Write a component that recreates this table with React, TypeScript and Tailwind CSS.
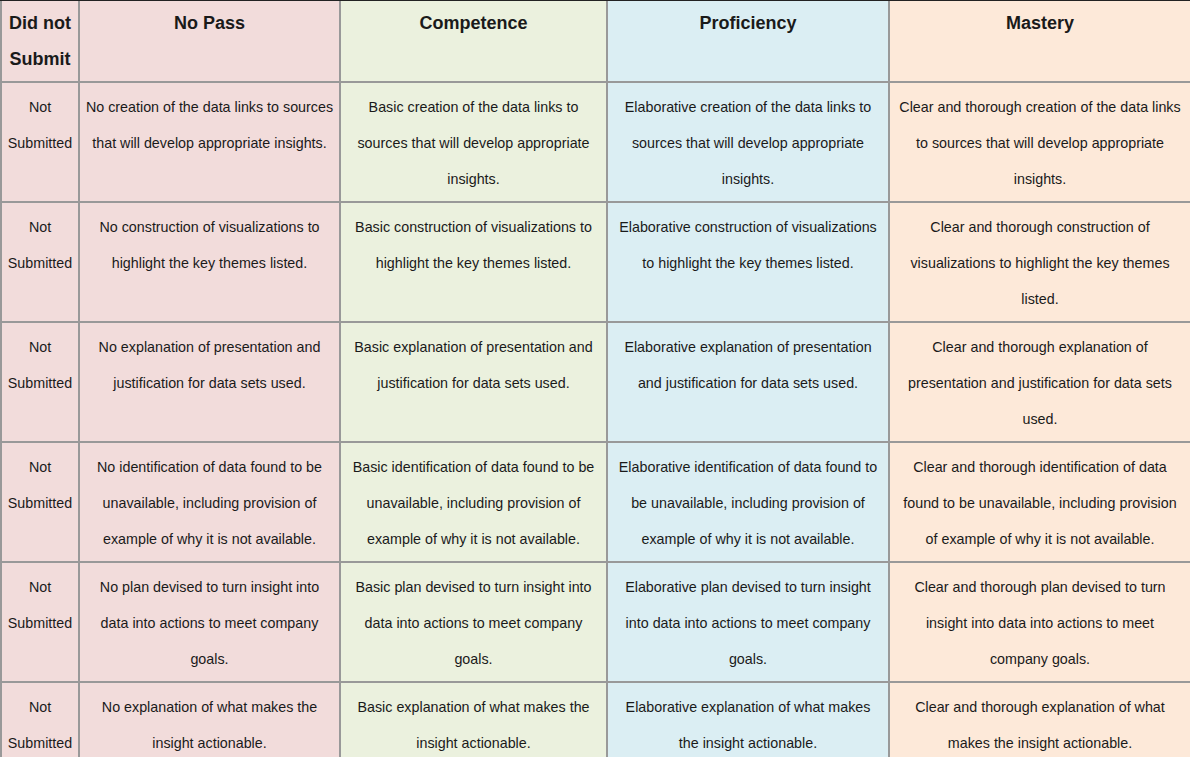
import { ReactElement } from "react";

type Level = "none" | "basic" | "elab" | "clear";

// "|" marks where the reference wraps each line
const rows: { [K in Level]: string }[] = [
    {
        none: "No creation of the data links to sources|that will develop appropriate insights.",
        basic: "Basic creation of the data links to|sources that will develop appropriate|insights.",
        elab: "Elaborative creation of the data links to|sources that will develop appropriate|insights.",
        clear: "Clear and thorough creation of the data links|to sources that will develop appropriate|insights.",
    },
    {
        none: "No construction of visualizations to|highlight the key themes listed.",
        basic: "Basic construction of visualizations to|highlight the key themes listed.",
        elab: "Elaborative construction of visualizations|to highlight the key themes listed.",
        clear: "Clear and thorough construction of|visualizations to highlight the key themes|listed.",
    },
    {
        none: "No explanation of presentation and|justification for data sets used.",
        basic: "Basic explanation of presentation and|justification for data sets used.",
        elab: "Elaborative explanation of presentation|and justification for data sets used.",
        clear: "Clear and thorough explanation of|presentation and justification for data sets|used.",
    },
    {
        none: "No identification of data found to be|unavailable, including provision of|example of why it is not available.",
        basic: "Basic identification of data found to be|unavailable, including provision of|example of why it is not available.",
        elab: "Elaborative identification of data found to|be unavailable, including provision of|example of why it is not available.",
        clear: "Clear and thorough identification of data|found to be unavailable, including provision|of example of why it is not available.",
    },
    {
        none: "No plan devised to turn insight into|data into actions to meet company|goals.",
        basic: "Basic plan devised to turn insight into|data into actions to meet company|goals.",
        elab: "Elaborative plan devised to turn insight|into data into actions to meet company|goals.",
        clear: "Clear and thorough plan devised to turn|insight into data into actions to meet|company goals.",
    },
    {
        none: "No explanation of what makes the|insight actionable.",
        basic: "Basic explanation of what makes the|insight actionable.",
        elab: "Elaborative explanation of what makes|the insight actionable.",
        clear: "Clear and thorough explanation of what|makes the insight actionable.",
    },
];

const cell = "border-r-2 border-b-2 border-[#999] px-[5px] text-center";
const head = "h-[82px] pt-[4px] text-[18px] font-bold leading-[36px]";
const body = "h-[120px] pt-[6px] text-[14.3px] leading-[36px] whitespace-nowrap";

const Lines = ({ text }: { text: string }): ReactElement => (
    <>
        {text.split ("|").map ((line, i) => (
            <div key={i}>{line}</div>
        ))}
    </>
);

const App = (): ReactElement => {
    return (
        <div className="h-[757px] w-[1190px] overflow-hidden border-t border-[#222] bg-white font-['Liberation_Sans',Arial,sans-serif] text-[#1a1a1a]">
            <div className="grid w-[1192px] grid-cols-[80px_261px_267px_282px_302px]">
                <div className={`${cell} ${head} border-l-2 bg-[#f2dcdb] px-0`}>Did not Submit</div>
                <div className={`${cell} ${head} bg-[#f2dcdb]`}>No Pass</div>
                <div className={`${cell} ${head} bg-[#ebf1de]`}>Competence</div>
                <div className={`${cell} ${head} bg-[#dbeef3]`}>Proficiency</div>
                <div className={`${cell} ${head} bg-[#fde9d9]`}>Mastery</div>

                {rows.map ((row, i) => (
                    <div key={i} className="contents">
                        <div className={`${cell} ${body} border-l-2 bg-[#f2dcdb] px-0`}>
                            <Lines text="Not|Submitted" />
                        </div>
                        <div className={`${cell} ${body} bg-[#f2dcdb]`}><Lines text={row.none} /></div>
                        <div className={`${cell} ${body} bg-[#ebf1de]`}><Lines text={row.basic} /></div>
                        <div className={`${cell} ${body} bg-[#dbeef3]`}><Lines text={row.elab} /></div>
                        <div className={`${cell} ${body} bg-[#fde9d9]`}><Lines text={row.clear} /></div>
                    </div>
                ))}
            </div>
        </div>
    );
};

export default App;
